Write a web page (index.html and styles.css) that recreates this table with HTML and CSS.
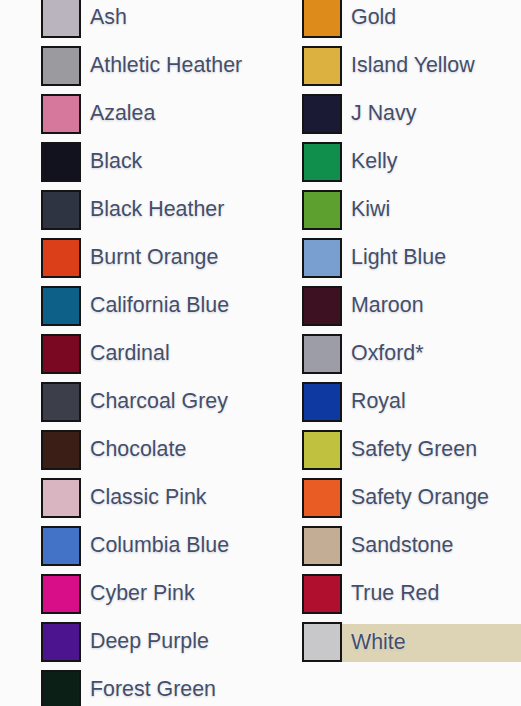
FILE: index.html
```html
<!DOCTYPE html>
<html>
<head>
<meta charset="utf-8">
<link rel="stylesheet" href="styles.css">
</head>
<body>
<div class="chart">
  <div class="col col-left">
    <div class="item"><span class="sw" style="background:#b9b4bd"></span><span class="label">Ash</span></div>
    <div class="item"><span class="sw" style="background:#9b9b9f"></span><span class="label">Athletic Heather</span></div>
    <div class="item"><span class="sw" style="background:#d6789c"></span><span class="label">Azalea</span></div>
    <div class="item"><span class="sw" style="background:#12121e"></span><span class="label">Black</span></div>
    <div class="item"><span class="sw" style="background:#2e3442"></span><span class="label">Black Heather</span></div>
    <div class="item"><span class="sw" style="background:#da3f1a"></span><span class="label">Burnt Orange</span></div>
    <div class="item"><span class="sw" style="background:#0d6188"></span><span class="label">California Blue</span></div>
    <div class="item"><span class="sw" style="background:#7a0822"></span><span class="label">Cardinal</span></div>
    <div class="item"><span class="sw" style="background:#3c3f4a"></span><span class="label">Charcoal Grey</span></div>
    <div class="item"><span class="sw" style="background:#3b1f17"></span><span class="label">Chocolate</span></div>
    <div class="item"><span class="sw" style="background:#d9b5c1"></span><span class="label">Classic Pink</span></div>
    <div class="item"><span class="sw" style="background:#4373c6"></span><span class="label">Columbia Blue</span></div>
    <div class="item"><span class="sw" style="background:#d80d88"></span><span class="label">Cyber Pink</span></div>
    <div class="item"><span class="sw" style="background:#4c158f"></span><span class="label">Deep Purple</span></div>
    <div class="item"><span class="sw" style="background:#0b1f16"></span><span class="label">Forest Green</span></div>
  </div>
  <div class="col col-right">
    <div class="item"><span class="sw" style="background:#dd8b1b"></span><span class="label">Gold</span></div>
    <div class="item"><span class="sw" style="background:#ddb140"></span><span class="label">Island Yellow</span></div>
    <div class="item"><span class="sw" style="background:#1b1a35"></span><span class="label">J Navy</span></div>
    <div class="item"><span class="sw" style="background:#0f8f4b"></span><span class="label">Kelly</span></div>
    <div class="item"><span class="sw" style="background:#5da02f"></span><span class="label">Kiwi</span></div>
    <div class="item"><span class="sw" style="background:#789fd0"></span><span class="label">Light Blue</span></div>
    <div class="item"><span class="sw" style="background:#3e1122"></span><span class="label">Maroon</span></div>
    <div class="item"><span class="sw" style="background:#9d9da7"></span><span class="label">Oxford*</span></div>
    <div class="item"><span class="sw" style="background:#0d39a0"></span><span class="label">Royal</span></div>
    <div class="item"><span class="sw" style="background:#c1c140"></span><span class="label">Safety Green</span></div>
    <div class="item"><span class="sw" style="background:#e95d25"></span><span class="label">Safety Orange</span></div>
    <div class="item"><span class="sw" style="background:#c4ad95"></span><span class="label">Sandstone</span></div>
    <div class="item"><span class="sw" style="background:#b0102d"></span><span class="label">True Red</span></div>
    <div class="item item-selected"><span class="sw" style="background:#c8c8cb"></span><span class="label">White</span></div>
  </div>
</div>
</body>
</html>
```

FILE: styles.css
```css
html, body {
  margin: 0;
  padding: 0;
  background: #fbfbfb;
  overflow: hidden;
}

.chart {
  display: grid;
  grid-template-columns: 261px 1fr;
  padding-left: 41px;
  margin-top: -2px;
  align-items: start;
}

.col {
  display: flex;
  flex-direction: column;
  gap: 8px;
}

.item {
  display: flex;
  align-items: center;
  height: 40px;
}

.sw {
  flex: none;
  width: 40px;
  height: 40px;
  box-sizing: border-box;
  border: 2px solid #141414;
}

.label {
  padding-left: 9px;
  padding-bottom: 1px;
  font-family: "Liberation Sans", Arial, sans-serif;
  font-size: 21.4px;
  color: #434e6a;
  line-height: 37px;
  text-shadow: 0 0 2px rgba(255,255,255,0.95), 0 1px 2px rgba(110,110,130,0.35);
  white-space: nowrap;
}

.item-selected .label {
  flex: 1;
  height: 37px;
  margin-top: 1px;
  background: #ddd4b5;
}
```
